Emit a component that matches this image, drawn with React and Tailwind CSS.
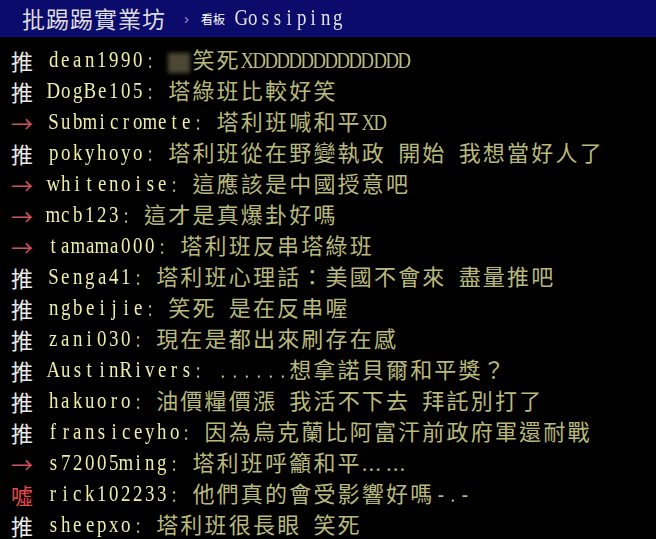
import React from "react";

const CJK = "font-['Noto_Sans_CJK_TC','Noto_Sans_CJK_JP',sans-serif] text-[22px] tracking-[2.2px]";
const SERIF = "font-['Liberation_Serif',serif] text-[23px]";

const ROWS = [
  { tag: "推", user: "dean1990", text: "笑死XDDDDDDDDDDDDD", blur: true },
  { tag: "推", user: "DogBe105", text: "塔綠班比較好笑" },
  { tag: "→", user: "Submicromete", text: "塔利班喊和平XD" },
  { tag: "推", user: "pokyhoyo", text: "塔利班從在野變執政 開始 我想當好人了" },
  { tag: "→", user: "whitenoise", text: "這應該是中國授意吧" },
  { tag: "→", user: "mcb123", text: "這才是真爆卦好嗎" },
  { tag: "→", user: "tamama000", text: "塔利班反串塔綠班" },
  { tag: "推", user: "Senga41", text: "塔利班心理話：美國不會來 盡量推吧" },
  { tag: "推", user: "ngbeijie", text: "笑死 是在反串喔" },
  { tag: "推", user: "zani030", text: "現在是都出來刷存在感" },
  { tag: "推", user: "AustinRivers", text: "......想拿諾貝爾和平獎？" },
  { tag: "推", user: "hakuoro", text: "油價糧價漲 我活不下去 拜託別打了" },
  { tag: "推", user: "fransiceyho", text: "因為烏克蘭比阿富汗前政府軍還耐戰" },
  { tag: "→", user: "s72005ming", text: "塔利班呼籲和平……" },
  { tag: "噓", user: "rick102233", text: "他們真的會受影響好嗎-.-" },
  { tag: "推", user: "sheepxo", text: "塔利班很長眼 笑死" },
];

const TAG_COLOR = {
  "推": "text-[#e8e8e8]",
  "→": "text-[#cc5060]",
  "噓": "text-[#e24a4a]",
};

// half-width chars sit on a 12.1px grid like the terminal does
function Half({ s }) {
  return s.split("").map((c, i) => (
    <span key={i} className={`inline-flex w-[12.1px] justify-center ${SERIF}`}>
      <span className="inline-block scale-x-[0.82]">{c === " " ? "\u00a0" : c}</span>
    </span>
  ));
}

// split a line into ascii / cjk runs so each gets its own grid width
function Mixed({ text }) {
  return text
    .split(/([\x00-\x7f]+|…)/)
    .filter(Boolean)
    .map((s, i) => {
      if (s === "…")
        return (
          <span key={i} className={`inline-block w-[24.2px] tracking-[1px] ${SERIF}`}>
            ...
          </span>
        );
      if (/^[\x00-\x7f]+$/.test(s)) return <Half key={i} s={s} />;
      return (
        <span key={i} className={CJK}>{s}</span>
      );
    });
}

function PushRow({ tag, user, text, blur }) {
  return (
    <div className="flex h-[31px] items-center whitespace-pre leading-[31px]">
      <span className={`inline-block w-[24.2px] ${CJK} ${TAG_COLOR[tag]}`}>{tag}</span>
      <Half s=" " />
      <span className="text-[#eeeea6]">
        <Half s={user} />
      </span>
      <span className="text-[#b9b97c]">
        <Half s=": " />
        {blur && (
          <span className="inline-block h-[22px] w-[24.2px] align-middle">
            <span className="block h-[20px] w-[22px] bg-[#4d4833] blur-[2px]" />
          </span>
        )}
        <Mixed text={text} />
      </span>
    </div>
  );
}

export default function App() {
  return (
    <div className="h-[539px] w-[656px] overflow-hidden bg-black">
      {/* HEADER */}
      <div className="flex h-[37px] items-center bg-[#0b0b6c] pl-[22px] leading-[37px]">
        <span className="font-['Noto_Sans_CJK_TC',sans-serif] text-[23px] tracking-[1px] text-[#dadada]">
          批踢踢實業坊
        </span>
        <span className="ml-[18px] font-['Liberation_Sans',sans-serif] text-[15px] text-[#9c9cc0]">›</span>
        <span className="ml-[12px] font-['Noto_Sans_CJK_TC',sans-serif] text-[12px] text-white">看板</span>
        <span className="ml-[10px] text-[#e2e2e2]">
          <Half s="Gossiping" />
        </span>
      </div>

      {/* PUSH LIST */}
      <div className="pl-[11px] pt-[8px]">
        {ROWS.map((r, i) => (
          <PushRow key={i} {...r} />
        ))}
      </div>
    </div>
  );
}
